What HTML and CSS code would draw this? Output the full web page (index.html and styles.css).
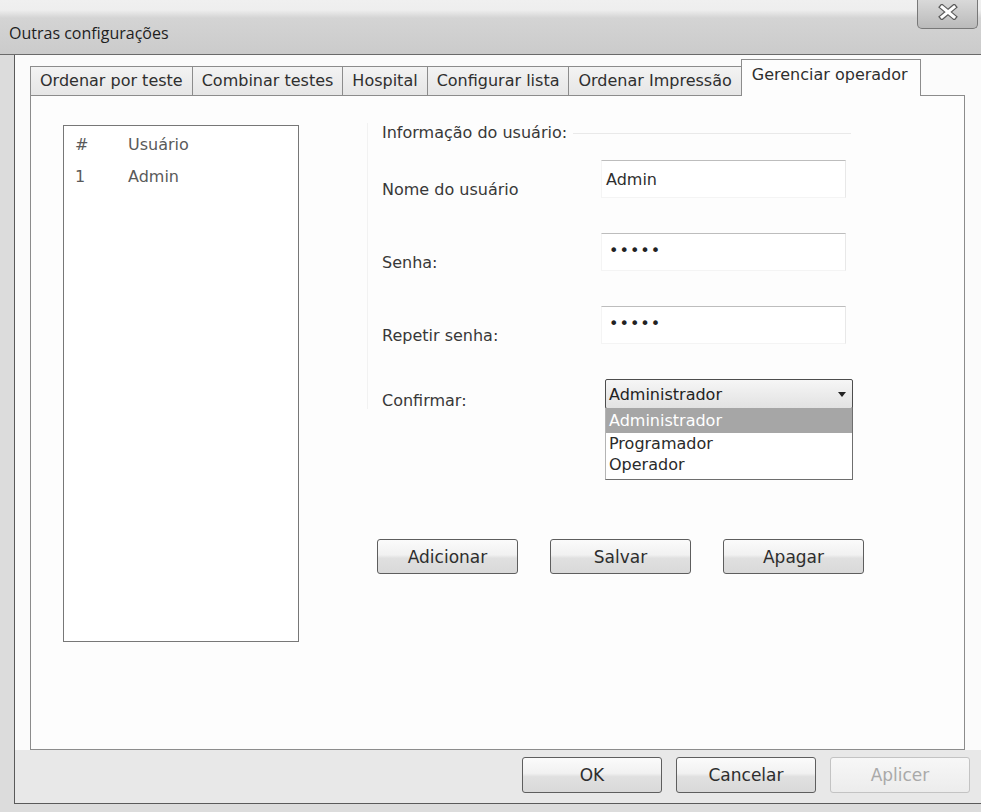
FILE: index.html
```html
<!DOCTYPE html>
<html lang="pt-BR">
<head>
<meta charset="utf-8">
<title>Outras configurações</title>
<link rel="stylesheet" href="styles.css">
</head>
<body>
<div class="window">
  <header class="titlebar">
    <span class="title">Outras configurações</span>
    <button class="close" type="button" aria-label="Fechar">
      <svg width="20" height="16" viewBox="0 0 20 16" aria-hidden="true">
        <path d="M4 3 L16 13 M16 3 L4 13" stroke="#5c5c5c" stroke-width="5.5" stroke-linecap="square" fill="none"/>
        <path d="M4 3 L16 13 M16 3 L4 13" stroke="#ffffff" stroke-width="3" stroke-linecap="square" fill="none"/>
      </svg>
    </button>
  </header>

  <div class="frame">
    <nav class="tabs">
      <span class="tab">Ordenar por teste</span>
      <span class="tab">Combinar testes</span>
      <span class="tab">Hospital</span>
      <span class="tab">Configurar lista</span>
      <span class="tab">Ordenar Impressão</span>
      <span class="tab active">Gerenciar operador</span>
    </nav>

    <section class="panel">
      <div class="user-list">
        <div class="list-row head"><span class="col-num">#</span><span>Usuário</span></div>
        <div class="list-row"><span class="col-num">1</span><span>Admin</span></div>
      </div>

      <div class="editor">
        <div class="info">
          <div class="info-title">Informação do usuário:</div>
          <div class="form">
            <div class="form-row">
              <span class="label">Nome do usuário</span>
              <div class="field">Admin</div>
            </div>
            <div class="form-row">
              <span class="label">Senha:</span>
              <div class="field secret">•••••</div>
            </div>
            <div class="form-row">
              <span class="label">Repetir senha:</span>
              <div class="field secret">•••••</div>
            </div>
            <div class="form-row combo-row">
              <span class="label">Confirmar:</span>
              <div class="combo">
                <span class="combo-value">Administrador</span>
                <svg class="combo-arrow" width="8" height="5" viewBox="0 0 8 5" aria-hidden="true"><path d="M0 0 H8 L4 5 Z" fill="#222"/></svg>
                <ul class="combo-list">
                  <li class="combo-item selected">Administrador</li>
                  <li class="combo-item">Programador</li>
                  <li class="combo-item">Operador</li>
                </ul>
              </div>
            </div>
          </div>
        </div>

        <div class="actions">
          <button class="btn" type="button">Adicionar</button>
          <button class="btn" type="button">Salvar</button>
          <button class="btn" type="button">Apagar</button>
        </div>
      </div>
    </section>

    <footer class="dialog-buttons">
      <button class="btn btn-dialog" type="button">OK</button>
      <button class="btn btn-dialog" type="button">Cancelar</button>
      <button class="btn btn-dialog" type="button" disabled>Aplicer</button>
    </footer>
  </div>
</div>
</body>
</html>
```

FILE: styles.css
```css
* {
  box-sizing: border-box;
}

html,
body {
  margin: 0;
  padding: 0;
}

body {
  width: 981px;
  height: 812px;
  overflow: hidden;
  background: #dcdcdc;
  font-family: "DejaVu Sans", "Liberation Sans", sans-serif;
  font-size: 16px;
  color: #383838;
}

/* ---- title bar ---- */
.titlebar {
  height: 55px;
  display: flex;
  align-items: flex-start;
  background: linear-gradient(#f0f0f0 0, #eeeeee 10px, #d4d4d4 18px, #cbcbcb 100%);
  border-bottom: 1px solid #6a6a6a;
}

.title {
  margin: 22px 0 0 9px;
  font-family: "Open Sans", "DejaVu Sans", sans-serif;
  font-size: 16px;
  line-height: 22px;
  color: #1e1e1e;
}

.close {
  margin-left: auto;
  margin-right: 3px;
  width: 61px;
  height: 29px;
  padding: 4px 0 0;
  display: flex;
  justify-content: center;
  align-items: flex-start;
  border: 1px solid #787878;
  border-top: none;
  border-radius: 0 0 5px 5px;
  background: linear-gradient(#d9d9d9, #bababa);
}

/* ---- dialog frame ---- */
.frame {
  margin-left: 14px;
  height: 749px;
  border-left: 1px solid #5a5a5a;
  border-bottom: 1px solid #5a5a5a;
  background: #fbfbfb;
}

.tabs {
  height: 40px;
  padding-left: 15px;
  display: flex;
  align-items: flex-end;
}

.tab {
  height: 29px;
  padding: 0 9px;
  line-height: 28px;
  white-space: nowrap;
  color: #2f2f2f;
  border: 1px solid #8c8c8c;
  border-left: none;
  border-bottom: none;
  background: linear-gradient(#f3f3f3, #e6e6e6);
}

.tab:first-child {
  border-left: 1px solid #8c8c8c;
}

.tab.active {
  position: relative;
  z-index: 1;
  height: 37px;
  margin-bottom: -1px;
  margin-left: -1px;
  padding: 4px 12px 0 10px;
  line-height: 22px;
  border-left: 1px solid #8c8c8c;
  background: #fdfdfd;
}

/* ---- tab page ---- */
.panel {
  height: 655px;
  margin: 0 16px 0 15px;
  padding: 29px 0 0 32px;
  display: flex;
  align-items: flex-start;
  border: 1px solid #8c8c8c;
  background: #fdfdfd;
}

.user-list {
  width: 236px;
  height: 517px;
  padding-top: 3px;
  border: 1px solid #777;
  background: #fff;
  color: #5a5a5a;
}

.list-row {
  display: flex;
  padding-left: 11px;
  line-height: 32px;
}

.col-num {
  width: 53px;
}

.editor {
  width: 510px;
  margin-left: 68px;
  margin-top: -2px;
}

.info {
  padding-left: 14px;
  border-left: 1px solid #f2f2f2;
}

.info-title {
  display: flex;
  align-items: center;
  line-height: 20px;
}

.info-title::after {
  content: "";
  flex: 1;
  margin-left: 6px;
  margin-right: 26px;
  border-top: 1px solid #e9e9e9;
}

.form {
  margin-top: 17px;
}

.form-row {
  height: 73px;
  display: grid;
  grid-template-columns: 219px 1fr;
  align-items: start;
}

.label {
  padding-top: 20px;
  line-height: 20px;
}

.field {
  width: 245px;
  height: 38px;
  padding: 8px 0 0 4px;
  line-height: 22px;
  border: 1px solid #f4f4f4;
  border-top-color: #bdbdbd;
  border-right-color: #e8e8e8;
  background: #fff;
  color: #2e2e2e;
}

.field.secret {
  padding: 6px 0 0 7px;
  letter-spacing: 1px;
  color: #222;
}

.form-row.combo-row {
  height: 30px;
}

.combo-row .label {
  padding-top: 12px;
}

.combo {
  position: relative;
  width: 248px;
  height: 30px;
  margin-left: 4px;
  padding: 0 6px 0 3px;
  display: flex;
  align-items: center;
  border: 1px solid #4d4d4d;
  border-radius: 2px;
  background: linear-gradient(#f6f6f6, #e2e2e2);
  color: #222;
}

.combo-arrow {
  margin-left: auto;
}

.combo-list {
  position: absolute;
  top: 100%;
  left: -1px;
  right: -1px;
  margin: 0;
  padding: 0 0 4px;
  list-style: none;
  border: 1px solid #6e6e6e;
  border-left-color: #b4b4b4;
  border-top: none;
  background: #fff;
  z-index: 2;
}

.combo-item {
  padding-left: 3px;
  line-height: 21px;
  color: #2a2a2a;
}

.combo-item.selected {
  line-height: 25px;
  background: #a6a6a6;
  color: #fff;
}

.actions {
  display: flex;
  gap: 32px;
  margin-top: 130px;
  margin-left: 10px;
}

.btn {
  flex: none;
  width: 141px;
  height: 35px;
  padding: 0;
  border: 1px solid #5e5e5e;
  border-radius: 3px;
  background: linear-gradient(#fbfbfb 0%, #f1f1f1 45%, #e0e0e0 55%, #d9d9d9 100%);
  font-family: "DejaVu Sans", "Liberation Sans", sans-serif;
  font-size: 17px;
  color: #2e2e2e;
}

/* ---- bottom buttons ---- */
.dialog-buttons {
  height: 53px;
  padding: 7px 11px 0 0;
  display: flex;
  justify-content: flex-end;
  align-items: flex-start;
  gap: 14px;
  background: #e8e8e8;
}

.btn-dialog {
  width: 140px;
  height: 36px;
}

.btn:disabled {
  border-color: #c3c3c3;
  background: linear-gradient(#f7f7f7, #ececec);
  color: #a9a9a9;
}
```
